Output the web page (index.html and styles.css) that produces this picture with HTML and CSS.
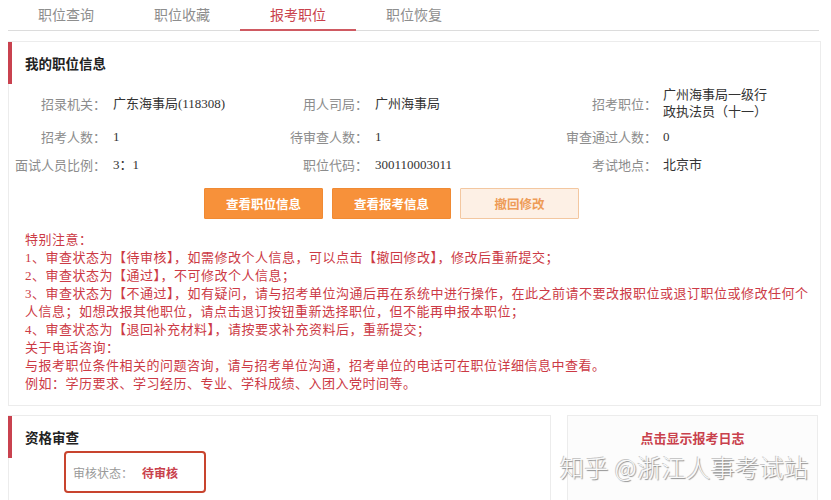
FILE: index.html
```html
<!DOCTYPE html>
<html lang="zh-CN">
<head>
<meta charset="utf-8">
<title>报考职位</title>
<link rel="stylesheet" href="styles.css">
</head>
<body>
<nav class="tabs">
  <div class="tab">职位查询</div>
  <div class="tab">职位收藏</div>
  <div class="tab active">报考职位</div>
  <div class="tab">职位恢复</div>
</nav>

<section class="panel info">
  <h2 class="panel-title">我的职位信息</h2>
  <div class="grid">
    <div class="lbl">招录机关：</div><div class="val">广东海事局(118308)</div>
    <div class="lbl">用人司局：</div><div class="val">广州海事局</div>
    <div class="lbl l3">招考职位：</div><div class="val">广州海事局一级行政执法员（十一）</div>

    <div class="lbl">招考人数：</div><div class="val">1</div>
    <div class="lbl">待审查人数：</div><div class="val">1</div>
    <div class="lbl l3">审查通过人数：</div><div class="val">0</div>

    <div class="lbl">面试人员比例：</div><div class="val">3：1</div>
    <div class="lbl">职位代码：</div><div class="val">300110003011</div>
    <div class="lbl l3">考试地点：</div><div class="val">北京市</div>
  </div>
  <div class="actions">
    <button class="btn primary">查看职位信息</button>
    <button class="btn primary">查看报考信息</button>
    <button class="btn light">撤回修改</button>
  </div>
  <div class="notes">
    <p>特别注意：</p>
    <p>1、审查状态为【待审核】，如需修改个人信息，可以点击【撤回修改】，修改后重新提交；</p>
    <p>2、审查状态为【通过】，不可修改个人信息；</p>
    <p>3、审查状态为【不通过】，如有疑问，请与招考单位沟通后再在系统中进行操作，在此之前请不要改报职位或退订职位或修改任何个人信息；如想改报其他职位，请点击退订按钮重新选择职位，但不能再申报本职位；</p>
    <p>4、审查状态为【退回补充材料】，请按要求补充资料后，重新提交；</p>
    <p>关于电话咨询：</p>
    <p>与报考职位条件相关的问题咨询，请与招考单位沟通，招考单位的电话可在职位详细信息中查看。</p>
    <p>例如：学历要求、学习经历、专业、学科成绩、入团入党时间等。</p>
  </div>
</section>

<div class="bottom">
  <section class="panel review">
    <h2 class="panel-title">资格审查</h2>
    <div class="status">
      <span class="status-lbl">审核状态：</span><span class="status-val">待审核</span>
      <span class="frame"></span>
    </div>
  </section>
  <section class="panel log">
    <div class="log-link">点击显示报考日志</div>
  </section>
</div>

<div class="watermark">知乎 @浙江人事考试站</div>
</body>
</html>
```

FILE: styles.css
```css
* { box-sizing: border-box; }

html, body { background: #fff; }

body {
  margin: 0 10px 0 8px;
  font-family: "Liberation Serif", "Noto Sans CJK SC", serif;
  font-size: 13px;
  color: #333;
  position: relative;
  height: 500px;
  overflow: hidden;
}

.tabs {
  display: flex;
  height: 31px;
  border-bottom: 1px solid #dcdcdc;
  margin-right: 2px;
}

.tab {
  width: 116px;
  height: 31px;
  line-height: 29px;
  text-align: center;
  font-family: "Noto Sans CJK SC", sans-serif;
  font-size: 14px;
  color: #8e8e8e;
}

.tab.active {
  color: #c9414c;
  border-bottom: 2px solid #cf5a62;
}

.panel {
  border: 1px solid #ececec;
  background: #fff;
}

.info {
  margin-top: 10px;
  padding-bottom: 12px;
}

.panel-title {
  margin: 0 0 0 -1px;
  height: 42px;
  line-height: 42px;
  border-left: 4px solid #c9424f;
  padding-left: 13px;
  font-family: "Noto Sans CJK SC", sans-serif;
  font-size: 13.5px;
  font-weight: 700;
  color: #222;
}

.grid {
  display: grid;
  grid-template-columns: 104px 147px 115px 185px 103px 112px;
  grid-template-rows: 38px 28px 28px;
  align-items: center;
  line-height: 17px;
}

.lbl {
  text-align: right;
  padding-right: 7px;
  color: #8c8c8c;
  white-space: nowrap;
  font-family: "Noto Sans CJK SC", sans-serif;
}

.lbl.l3 { padding-right: 6px; }

.val {
  color: #333;
}

.actions {
  display: flex;
  gap: 9px;
  margin: 10px 0 0 195px;
}

.btn {
  width: 119px;
  height: 31px;
  font-family: "Noto Sans CJK SC", sans-serif;
  font-size: 12.5px;
  font-weight: 700;
  border-radius: 1px;
  padding: 0;
}

.btn.primary {
  background: #f7913a;
  border: 1px solid #f08a33;
  color: #fff;
}

.btn.light {
  background: #fdf0e5;
  border: 1px solid #f3c7a0;
  color: #ee9c58;
}

.notes {
  margin-top: 12px;
  padding-left: 16px;
  width: 806px;
  color: #cc3a45;
  line-height: 18px;
  letter-spacing: 0.5px;
}

.notes p { margin: 0; }

.bottom {
  display: flex;
  gap: 16px;
  margin-top: 9px;
  margin-right: 3px;
}

.review {
  width: 543px;
  height: 110px;
}

.log {
  flex: 1;
  height: 110px;
  background: #fcfcfc;
}

.status {
  position: relative;
  padding: 6px 0 0 64px;
  line-height: 18px;
  font-family: "Noto Sans CJK SC", sans-serif;
  font-size: 12px;
}

.status-lbl { color: #999; }

.status-val {
  margin-left: 9px;
  color: #c9414c;
  font-weight: 700;
}

.frame {
  position: absolute;
  left: 55px;
  top: -7px;
  width: 142px;
  height: 42px;
  border: 2px solid #c8442e;
  border-radius: 4px;
}

.log-link {
  text-align: center;
  padding-top: 13px;
  line-height: 18px;
  font-family: "Noto Sans CJK SC", sans-serif;
  font-size: 13px;
  font-weight: 700;
  color: #c9414c;
}

.watermark {
  position: absolute;
  left: 552px;
  top: 449px;
  font-family: "Noto Sans CJK SC", sans-serif;
  font-size: 24px;
  font-weight: 300;
  color: #fafafa;
  letter-spacing: 0.5px;
  text-shadow: 1px 1px 1px #8d8d8d, -1px -1px 0 #c8c8c8;
  white-space: nowrap;
}
```
